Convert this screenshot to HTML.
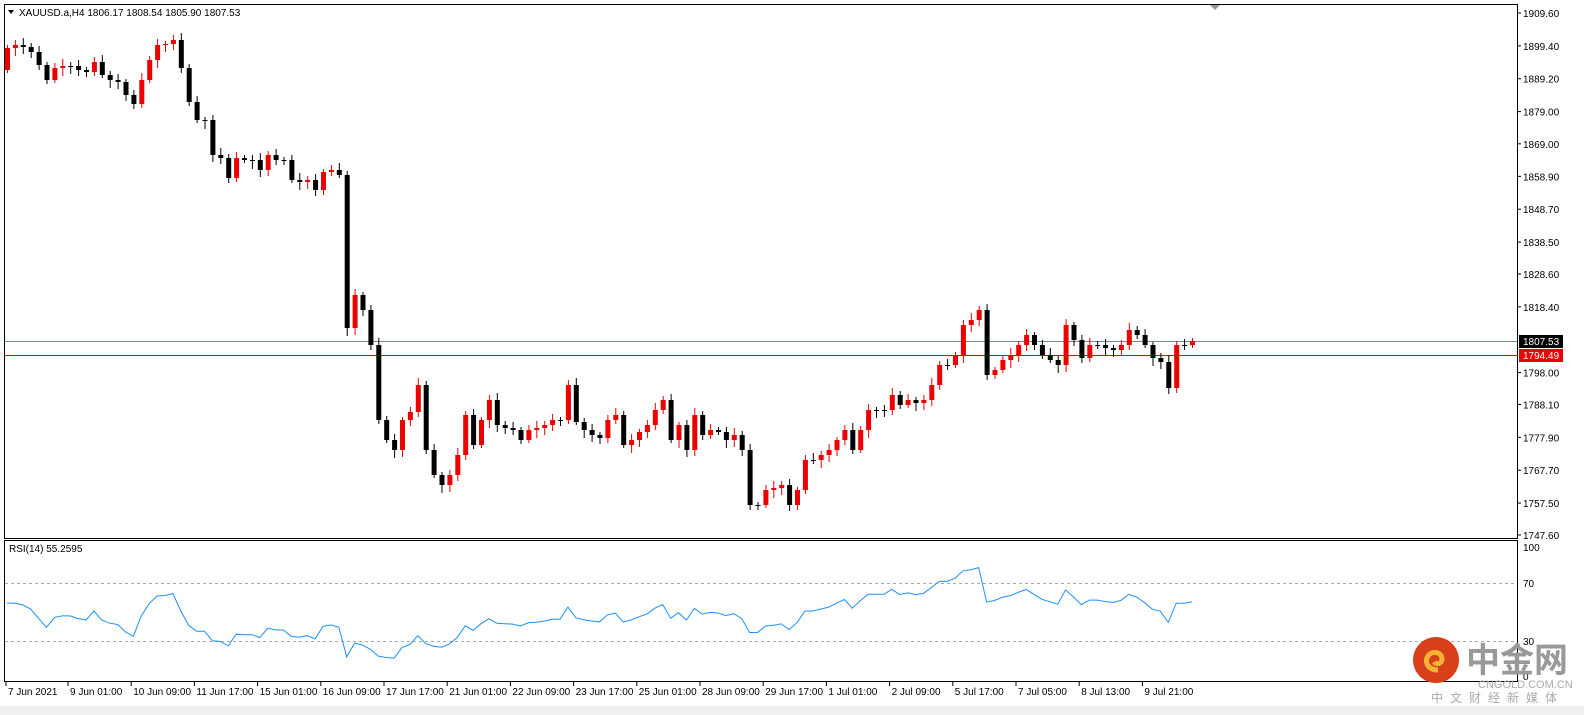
<!DOCTYPE html>
<html><head><meta charset="utf-8"><style>
body{margin:0;background:#fff;width:1584px;height:715px;overflow:hidden;font-family:"Liberation Sans",sans-serif}
svg{position:absolute;left:0;top:0}
</style></head><body>
<svg id="s" width="1584" height="715" xmlns="http://www.w3.org/2000/svg" font-family="Liberation Sans, sans-serif" font-size="10">
<rect x="0" y="0" width="1584" height="715" fill="#fff"/>
<rect x="4.5" y="4.5" width="1513" height="534" fill="none" stroke="#000"/>
<rect x="4.5" y="540.5" width="1513" height="141" fill="none" stroke="#000"/>
<line x1="5" y1="341.5" x2="1517" y2="341.5" stroke="#778899"/>
<line x1="5" y1="355.5" x2="1517" y2="355.5" stroke="#e00"/>
<line x1="5" y1="583.5" x2="1517" y2="583.5" stroke="#aaa" stroke-dasharray="3,3"/>
<line x1="5" y1="641.5" x2="1517" y2="641.5" stroke="#aaa" stroke-dasharray="3,3"/>
<polygon points="1210,5 1220,5 1215,10" fill="#999"/>
<polygon points="8,10 14,10 11,14" fill="#000"/>
<text x="19" y="16" font-size="10">XAUUSD.a,H4  1806.17 1808.54 1805.90 1807.53</text>
<text x="9" y="552" font-size="10">RSI(14) 55.2595</text>
<g id="c"></g>
<g id="ax" font-size="10"></g>
<rect x="1519" y="335" width="44" height="13" fill="#000"/>
<text x="1523" y="345" fill="#fff">1807.53</text>
<rect x="1519" y="349" width="44" height="13" fill="#e00"/>
<text x="1523" y="359" fill="#fff">1794.49</text>
<text x="1523" y="551">100</text>
<text x="1523" y="587">70</text>
<text x="1523" y="645">30</text>
<text x="1523" y="680">0</text>
<g id="tx" font-size="10"></g>
<rect x="0" y="706" width="1584" height="9" fill="#f0f0f0"/>
<circle cx="1436" cy="660" r="23" fill="#d8401c"/>
<path d="M1438,670 c-10,0 -14,-8 -10,-14 c4,-6 14,-4 14,3 c0,5 -6,6 -8,3" stroke="#f6b431" stroke-width="5" fill="none"/>
<text x="1466" y="672" font-size="34" fill="#999" font-weight="bold" font-family="Liberation Sans, Noto Sans CJK SC, sans-serif">中金网</text>
<text x="1478" y="688" font-size="11" fill="#aaa">CNGOLD.COM.CN</text>
<text x="1431" y="702" font-size="12" fill="#aaa" letter-spacing="7" font-family="Liberation Sans, Noto Sans CJK SC, sans-serif">中文财经新媒体</text>
</svg>
<script>
var ys=[48,45,47,52,65,80,68,66,66,70,72,62,75,80,82,95,104,80,60,45,44,40,68,102,120,120,155,158,178,158,160,160,170,155,160,160,180,182,180,190,172,170,175,328,295,310,345,420,440,450,420,412,385,450,475,485,475,455,415,445,420,400,425,428,430,440,430,428,425,420,420,385,422,430,435,438,420,415,445,440,432,425,410,400,440,425,450,415,435,430,432,440,435,450,505,505,490,488,485,505,490,460,460,455,450,440,430,450,430,410,410,410,395,405,400,403,400,385,365,365,355,325,320,310,375,370,360,355,345,335,345,355,360,365,325,340,358,345,345,348,350,345,330,335,345,358,362,388,345,345,341];
var g=document.getElementById('c'),h='',prev=70;
function X(i){return 7+i*7.9}
for(var i=0;i<ys.length;i++){var o=prev,c=ys[i];var x=X(i);var up=c<o;var t=Math.min(o,c),b=Math.max(o,c);if(b-t<1)b=t+1;
var col=up?'#e00':'#000';
var hi=t-3-(i*7%5),lo=b+3+(i*11%6);
h+='<line x1="'+(x+0.5)+'" y1="'+hi+'" x2="'+(x+0.5)+'" y2="'+lo+'" stroke="'+col+'"/>';
h+='<rect x="'+(x-2)+'" y="'+t+'" width="5" height="'+(b-t)+'" fill="'+col+'"/>';prev=c;}
var p=ys.map(function(y){return 1909.6-(y-13)/3.222});var ag=1.2,al=1.1,pts=[];
for(var i=1;i<p.length;i++){var d=p[i]-p[i-1];var gg=d>0?d:0,ll=d<0?-d:0;
ag=(ag*13+gg)/14;al=(al*13+ll)/14;
var r=al==0?100:100-100/(1+ag/al);pts.push(X(i).toFixed(1)+','+(681-r*1.45).toFixed(1));}
h+='<polyline points="'+X(0)+',603 '+pts.join(' ')+'" fill="none" stroke="#1e90ff"/>';
g.innerHTML=h;
var a='',L=[1909.6,1899.4,1889.2,1879,1869,1858.9,1848.7,1838.5,1828.6,1818.4,1798,1788.1,1777.9,1767.7,1757.5,1747.6];
L.forEach(function(v){var y=13+(1909.6-v)*3.222;a+='<line x1="1517" y1="'+y+'" x2="1521" y2="'+y+'" stroke="#000"/><text x="1523" y="'+(y+4)+'">'+v.toFixed(2)+'</text>';});
document.getElementById('ax').innerHTML=a;
var T=['7 Jun 2021','9 Jun 01:00','10 Jun 09:00','11 Jun 17:00','15 Jun 01:00','16 Jun 09:00','17 Jun 17:00','21 Jun 01:00','22 Jun 09:00','23 Jun 17:00','25 Jun 01:00','28 Jun 09:00','29 Jun 17:00','1 Jul 01:00','2 Jul 09:00','5 Jul 17:00','7 Jul 05:00','8 Jul 13:00','9 Jul 21:00'];
var s='';T.forEach(function(t,i){var x=6+i*63.2;if(i>0)x=68+(i-1)*63.2;s+='<line x1="'+x+'" y1="682" x2="'+x+'" y2="686" stroke="#000"/><text x="'+(x+2)+'" y="695">'+t+'</text>';});
document.getElementById('tx').innerHTML=s;
</script>
</body></html>
